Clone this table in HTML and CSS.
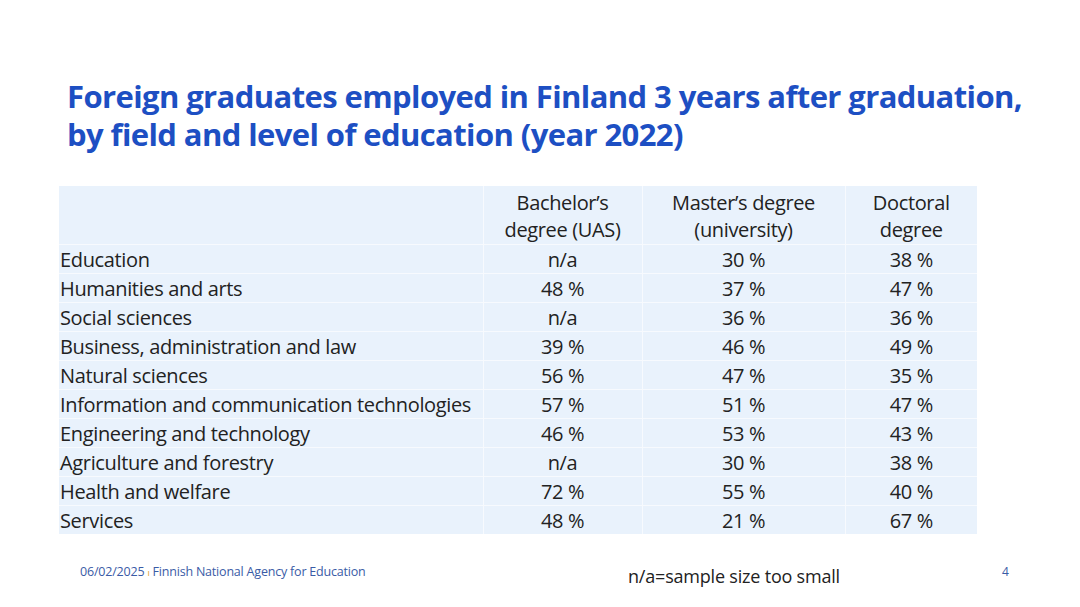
FILE: index.html
```html
<!DOCTYPE html>
<html lang="en">
<head>
<meta charset="utf-8">
<link rel="stylesheet" href="styles.css">
</head>
<body>
<div class="slide">
  <h1 class="title">Foreign graduates employed in Finland 3 years after graduation,<br>by field and level of education (year 2022)</h1>
  <table class="data">
    <colgroup>
      <col class="c1"><col class="c2"><col class="c3"><col class="c4">
    </colgroup>
    <thead>
      <tr><th></th><th>Bachelor’s<br>degree (UAS)</th><th>Master’s degree<br>(university)</th><th>Doctoral<br>degree</th></tr>
    </thead>
    <tbody>
      <tr><td>Education</td><td>n/a</td><td>30 %</td><td>38 %</td></tr>
      <tr><td>Humanities and arts</td><td>48 %</td><td>37 %</td><td>47 %</td></tr>
      <tr><td>Social sciences</td><td>n/a</td><td>36 %</td><td>36 %</td></tr>
      <tr><td>Business, administration and law</td><td>39 %</td><td>46 %</td><td>49 %</td></tr>
      <tr><td>Natural sciences</td><td>56 %</td><td>47 %</td><td>35 %</td></tr>
      <tr><td>Information and communication technologies</td><td>57 %</td><td>51 %</td><td>47 %</td></tr>
      <tr><td>Engineering and technology</td><td>46 %</td><td>53 %</td><td>43 %</td></tr>
      <tr><td>Agriculture and forestry</td><td>n/a</td><td>30 %</td><td>38 %</td></tr>
      <tr><td>Health and welfare</td><td>72 %</td><td>55 %</td><td>40 %</td></tr>
      <tr><td>Services</td><td>48 %</td><td>21 %</td><td>67 %</td></tr>
    </tbody>
  </table>
  <div class="footer">
    <div class="meta">06/02/2025 <span class="sep">ı</span> Finnish National Agency for Education</div>
    <div class="note">n/a=sample size too small</div>
    <div class="page">4</div>
  </div>
</div>
</body>
</html>
```

FILE: styles.css
```css
html, body {
  margin: 0;
  padding: 0;
  background: #ffffff;
}
.slide {
  width: 1080px;
  height: 607px;
  box-sizing: border-box;
  padding: 77px 0 0 0;
  font-family: "Open Sans", "Noto Sans", sans-serif;
  color: #222222;
  overflow: hidden;
}
.title {
  margin: 0 0 0 67px;
  font-size: 31px;
  line-height: 38px;
  font-weight: 700;
  color: #1d4fc3;
  letter-spacing: -0.6px;
  white-space: nowrap;
}
.data {
  margin: 33px 0 0 59px;
  width: 918px;
  border-collapse: collapse;
  table-layout: fixed;
  background: #e9f2fc;
  font-size: 20px;
  letter-spacing: -0.35px;
}
.c1 { width: 424px; }
.c2 { width: 159px; }
.c3 { width: 203px; }
.c4 { width: 132px; }
.data th, .data td {
  border: 1px solid #f7fafe;
  padding: 0;
  font-weight: 400;
  text-align: center;
  white-space: nowrap;
}
.data th {
  height: 56px;
  line-height: 27px;
  vertical-align: middle;
  padding-top: 2px;
}
.data td {
  height: 27px;
  line-height: 27px;
  padding-top: 1px;
}
.data tr > *:first-child {
  text-align: left;
  padding-left: 1px;
  border-left: none;
}
.data tr > *:last-child { border-right: none; }
.data thead th { border-top: none; }
.data tbody tr:last-child td { border-bottom: none; }
.footer {
  display: flex;
  align-items: flex-start;
  margin: 29px 0 0 0;
}
.meta {
  margin-left: 80px;
  width: 548px;
  font-size: 12.5px;
  line-height: 17px;
  color: #3a5ba6;
  letter-spacing: -0.2px;
}
.sep { color: #e0a030; font-size: 9px; }
.note {
  width: 374px;
  margin-top: 1px;
  font-size: 18px;
  line-height: 25px;
  color: #222222;
  letter-spacing: -0.2px;
}
.page {
  font-size: 12px;
  line-height: 17px;
  color: #3a5ba6;
}
```
